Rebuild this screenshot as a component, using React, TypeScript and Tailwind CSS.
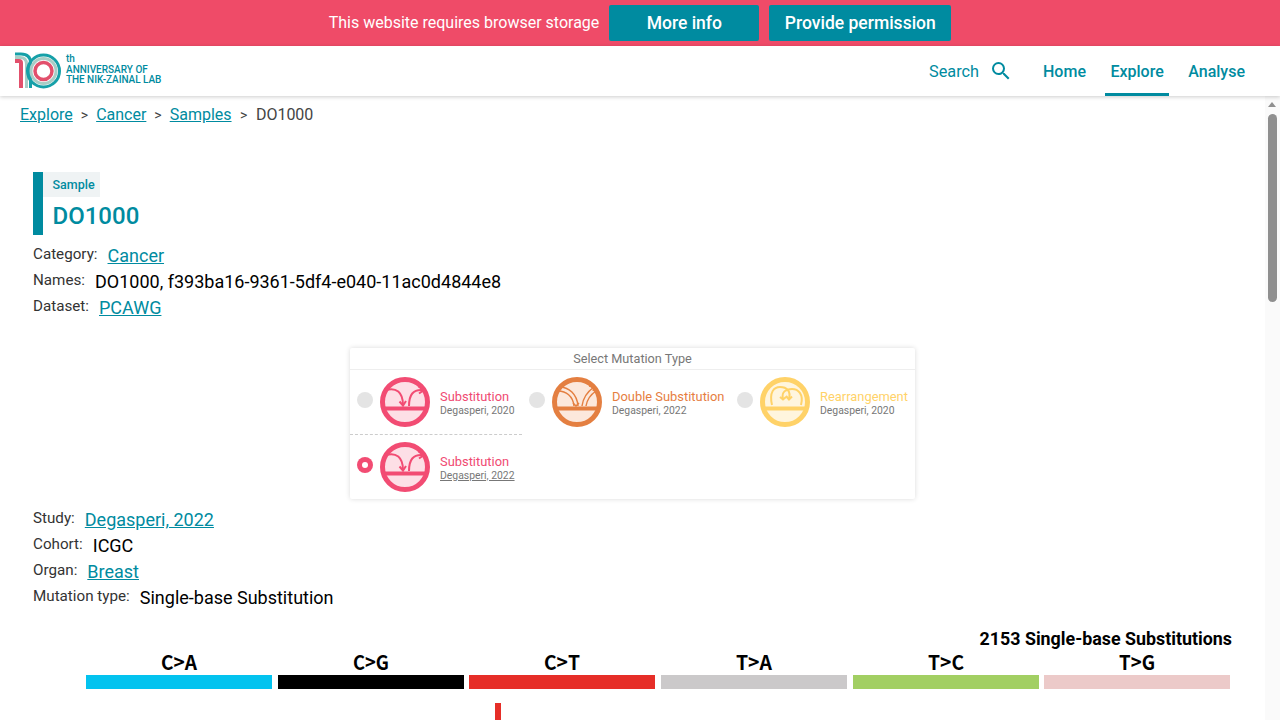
import { MdSearch } from 'react-icons/md'

const teal = 'text-[#008ba0]'

interface MutationOption {
  title: string
  study: string
  kind: 'sub' | 'dbs' | 'rearr'
  titleColor: string
  selected?: boolean
  width: string
  underline?: boolean
}

const rowOne: MutationOption[] = [
  { title: 'Substitution', study: 'Degasperi, 2020', kind: 'sub', titleColor: 'text-[#f04a72]', width: 'w-[172px]' },
  { title: 'Double Substitution', study: 'Degasperi, 2022', kind: 'dbs', titleColor: 'text-[#e67e3f]', width: 'w-[208px]' },
  { title: 'Rearrangement', study: 'Degasperi, 2020', kind: 'rearr', titleColor: 'text-[#ffd268]', width: 'w-[184px]' },
]

const chartBars = [
  { label: 'C>A', x: 86, color: '#03c3ef' },
  { label: 'C>G', x: 278, color: '#000000' },
  { label: 'C>T', x: 469, color: '#e62e28' },
  { label: 'T>A', x: 661, color: '#cbc9ca' },
  { label: 'T>C', x: 853, color: '#a2cf63' },
  { label: 'T>G', x: 1044, color: '#eccac9' },
]

function Logo() {
  return (
    <svg width="48" height="38" viewBox="0 0 48 38" fill="none" className="shrink-0">
      <path d="M0 2 H6 Q15.500 2 15.500 11 V36" stroke="#16a0a8" strokeWidth="3" />
      <path d="M0 5.500 H5 Q11.500 5.500 11.500 12 V36" stroke="#a8cdc6" strokeWidth="3" />
      <path d="M0 9 H4 Q6 9 6 11 V36" stroke="#e2506c" strokeWidth="4" fill="none" />
      <circle cx="28.500" cy="19" r="16" stroke="#16a0a8" strokeWidth="3" />
      <circle cx="28.500" cy="19" r="12.500" stroke="#a8cdc6" strokeWidth="3" />
      <circle cx="28.500" cy="19" r="8.500" stroke="#e2506c" strokeWidth="3.500" />
    </svg>
  )
}

function MutationIcon({ kind }: { kind: MutationOption['kind'] }) {
  const colors = {
    sub: { stroke: '#f24c73', fill: '#fddfe6' },
    dbs: { stroke: '#e47f41', fill: '#fce8dc' },
    rearr: { stroke: '#ffd268', fill: '#fff5de' },
  }[kind]
  return (
    <svg width="50" height="50" viewBox="0 0 50 50" fill="none" className="shrink-0">
      <circle cx="25" cy="25" r="22.500" fill={colors.fill} stroke={colors.stroke} strokeWidth="5" />
      <path d="M4 31.500 H46" stroke={colors.stroke} strokeWidth="4" />
      {kind === 'sub' && (
        <g stroke={colors.stroke} strokeWidth="2" fill="none">
          <path d="M6 13 C16 10 23 15 23 28" />
          <path d="M19.500 24.500 L23 28.500 L26 24" />
          <path d="M29 29 C29 18 33 12 43 13" />
          <path d="M38.500 9.500 L44 13 L39 16.500" />
        </g>
      )}
      {kind === 'dbs' && (
        <g stroke={colors.stroke} strokeWidth="1.500" fill="none">
          <path d="M7 10 C17 10 25 17 26 29" />
          <path d="M6 14 C14 14 21 19 22 29" />
          <path d="M30 29 C31 21 35 15 42 10" />
          <path d="M34 29 C35 23 38 18 44 14" />
          <path d="M37 9 L43 10 L41 14" />
          <path d="M21 26 L24 29 L27 26" />
        </g>
      )}
      {kind === 'rearr' && (
        <g stroke={colors.stroke} strokeWidth="2" fill="none">
          <path d="M12 28 C9 15 14 10 20 10 C27 10 31 14 29 22" />
          <path d="M41 28 C44 17 38 12 32 12 C26 12 21 15 23 22" />
          <path d="M26 19 L29 22.500 L32 19.500" />
          <path d="M20 20 L23 22.500 L26 20" />
        </g>
      )}
    </svg>
  )
}

function MutationItem({ option }: { option: MutationOption }) {
  return (
    <div className={`flex items-center h-[64px] pl-[7px] ${option.width}`}>
      {option.selected ? (
        <span className="w-4 h-4 mb-1 rounded-full bg-[#f24c73] flex items-center justify-center shrink-0">
          <span className="w-[6px] h-[6px] rounded-full bg-white" />
        </span>
      ) : (
        <span className="w-4 h-4 mb-1 rounded-full bg-[#e4e4e4] shrink-0" />
      )}
      <span className="ml-[7px]">
        <MutationIcon kind={option.kind} />
      </span>
      <div className="ml-[10px] pt-[2px] whitespace-nowrap">
        <p className={`text-[12.900px] leading-[14px] ${option.titleColor}`}>{option.title}</p>
        <p className={`text-[10.400px] leading-[13px] text-[#777] ${option.underline ? 'underline' : ''}`}>{option.study}</p>
      </div>
    </div>
  )
}

function InfoRow({ label, value, link }: { label: string; value: string; link?: boolean }) {
  return (
    <div className="flex items-center h-[26px]">
      <span className="text-[15.200px] text-[#333] relative -top-[2px]">{label}</span>
      {link ? (
        <a className={`ml-[10px] text-lg leading-6 underline ${teal}`}>{value}</a>
      ) : (
        <span className="ml-[10px] text-lg leading-6 text-black">{value}</span>
      )}
    </div>
  )
}

export default function App() {
  return (
    <div className="h-[720px] flex flex-col overflow-hidden bg-white font-['Roboto',sans-serif]">
      {/* Storage banner */}
      <div className="h-[46px] shrink-0 bg-[#ef4b68] flex items-center justify-center gap-[10px]">
        <span className="text-white text-base">This website requires browser storage</span>
        <button className="h-9 w-[150px] rounded-[2px] bg-[#008ba0] text-white text-[17.500px] font-medium">More info</button>
        <button className="h-9 w-[182px] rounded-[2px] bg-[#008ba0] text-white text-[17.500px] font-medium">Provide permission</button>
      </div>

      {/* Header */}
      <header className="h-[50px] shrink-0 flex items-center pl-[15px] pr-[35px] shadow-[0_1px_4px_rgba(0,0,0,0.2)] relative z-10 bg-white">
        <Logo />
        <div className={`ml-[3px] -mt-[3px] text-[10px] leading-[10.500px] font-medium ${teal}`}>
          <p className="mb-[0.500px]">th</p>
          <p>ANNIVERSARY OF</p>
          <p className="tracking-[-0.05px]">THE NIK-ZAINAL LAB</p>
        </div>
        <div className="ml-auto flex items-center h-full">
          <span className={`text-[16.300px] pt-[2px] ${teal}`}>Search</span>
          <MdSearch className={`ml-[10px] ${teal}`} size={24} />
          <nav className="ml-[29px] flex items-center h-full gap-[24.500px] text-base font-medium pl-[1px]">
            <a className={`pt-[1px] ${teal}`}>Home</a>
            <a className={`h-full pt-[1px] flex items-center relative ${teal}`}>
              Explore
              <span className="absolute -left-[5px] -right-[5px] bottom-0 h-[3px] bg-[#008ba0]" />
            </a>
            <a className={`pt-[1px] ${teal}`}>Analyse</a>
          </nav>
        </div>
      </header>

      {/* Page content */}
      <div className="flex-1 min-h-0 relative">
        <main className="h-full overflow-hidden">
          <div className="pl-5 pt-[9px] text-base leading-[20px] text-[#444] flex items-center">
            <a className={`underline ${teal}`}>Explore</a>
            <span className="mx-[8px] text-sm">&gt;</span>
            <a className={`underline ${teal}`}>Cancer</a>
            <span className="mx-[8px] text-sm">&gt;</span>
            <a className={`underline ${teal}`}>Samples</a>
            <span className="ml-[8.500px] mr-[8.500px] text-sm">&gt;</span>
            <span>DO1000</span>
          </div>

          <section className="ml-[33px] mt-[47px]">
            <div className="border-l-[10px] border-[#008ba0] h-[63px]">
              <div className={`w-[57px] h-[25px] bg-[#eff3f4] pl-[9.500px] text-[12.500px] leading-[25px] font-medium ${teal}`}>Sample</div>
              <h1 className={`pl-[9.500px] mt-[5px] text-2xl leading-[28px] font-medium ${teal}`}>DO1000</h1>
            </div>
            <div className="mt-[8px]">
              <InfoRow label="Category:" value="Cancer" link />
              <InfoRow label="Names:" value="DO1000, f393ba16-9361-5df4-e040-11ac0d4844e8" />
              <InfoRow label="Dataset:" value="PCAWG" link />
            </div>
          </section>

          <div className="ml-[350px] mt-[27px] w-[565px] h-[151px] bg-white rounded-[2px] shadow-[0_0_5px_rgba(0,0,0,0.15)]">
            <div className="h-[22px] border-b border-[#eee] text-center text-[12.700px] leading-[22px] text-[#777]">Select Mutation Type</div>
            <div className="flex">
              {rowOne.map((option) => (
                <MutationItem key={option.kind} option={option} />
              ))}
            </div>
            <div className="w-[172px] border-t border-dashed border-[#ccc]">
              <MutationItem
                option={{
                  title: 'Substitution',
                  study: 'Degasperi, 2022',
                  kind: 'sub',
                  titleColor: 'text-[#f04a72]',
                  width: 'w-[172px]',
                  selected: true,
                  underline: true,
                }}
              />
            </div>
          </div>

          <section className="ml-[33px] mt-[8px]">
            <InfoRow label="Study:" value="Degasperi, 2022" link />
            <InfoRow label="Cohort:" value="ICGC" />
            <InfoRow label="Organ:" value="Breast" link />
            <InfoRow label="Mutation type:" value="Single-base Substitution" />
          </section>

          {/* Spectrum chart */}
          <p className="relative z-10 mt-[18px] pr-[48px] text-right text-[17.850px] leading-5 font-bold text-black">2153 Single-base Substitutions</p>
          <svg width="1265" height="120" viewBox="0 0 1265 120" className="block -mt-[10px]">
            {chartBars.map((bar) => (
              <g key={bar.label}>
                <text
                  x={bar.x + 93}
                  y="31"
                  textAnchor="middle"
                  fontFamily="'Noto Sans CJK JP', sans-serif"
                  fontWeight="700"
                  fontSize="20"
                  textLength="36"
                  lengthAdjust="spacingAndGlyphs"
                  fill="#000"
                >
                  {bar.label}
                </text>
                <rect x={bar.x} y="36" width="186" height="14" fill={bar.color} />
              </g>
            ))}
            <rect x="495" y="64" width="6" height="40" fill="#e62e28" />
          </svg>
        </main>

        {/* Page scrollbar */}
        <div className="absolute right-0 top-0 bottom-0 w-[15px] bg-[#fafafa]">
          <span className="absolute left-[3px] top-[6px] w-0 h-0 border-x-[4.500px] border-x-transparent border-b-[5px] border-b-[#8f8f8f]" />
          <span className="absolute left-[3px] top-[18px] w-[9px] h-[188px] rounded-full bg-[#8f8f8f]" />
        </div>
      </div>
    </div>
  )
}
